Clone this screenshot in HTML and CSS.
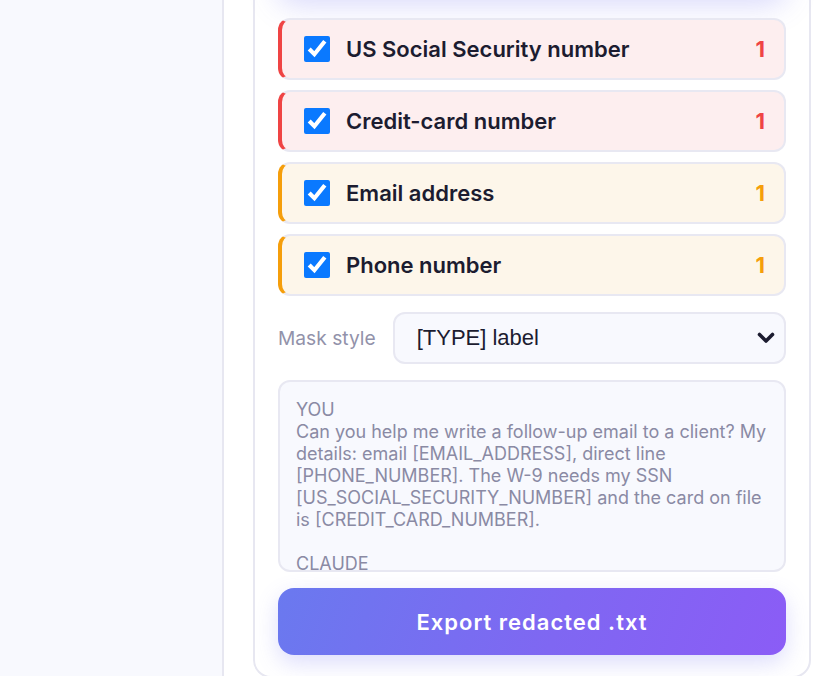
FILE: index.html
```html
<!DOCTYPE html>
<html lang="en">
<head>
<meta charset="utf-8">
<title>Redact</title>
<link rel="stylesheet" href="styles.css">
</head>
<body>
<div class="app">
  <aside class="sidebar"></aside>
  <main class="main">
    <section class="card">
      <div class="summary"></div>
      <ul class="types">
        <li class="type type-high">
          <input type="checkbox" class="check" checked>
          <span class="type-name">US Social Security number</span>
          <span class="type-count">1</span>
        </li>
        <li class="type type-high">
          <input type="checkbox" class="check" checked>
          <span class="type-name">Credit-card number</span>
          <span class="type-count">1</span>
        </li>
        <li class="type type-mid">
          <input type="checkbox" class="check" checked>
          <span class="type-name">Email address</span>
          <span class="type-count">1</span>
        </li>
        <li class="type type-mid">
          <input type="checkbox" class="check" checked>
          <span class="type-name">Phone number</span>
          <span class="type-count">1</span>
        </li>
      </ul>
      <div class="mask-row">
        <label class="mask-label" for="mask">Mask style</label>
        <div class="select-wrap">
          <select id="mask" class="select">
            <option>[TYPE] label</option>
            <option>█████ block</option>
            <option>*** stars</option>
          </select>
          <svg class="chev" width="18" height="12" viewBox="0 0 18 12" aria-hidden="true"><polyline points="2.5,2.5 9,9 15.5,2.5" fill="none" stroke="#1c1c30" stroke-width="3.6" stroke-linecap="round" stroke-linejoin="round"/></svg>
        </div>
      </div>
      <textarea class="preview" readonly>YOU
Can you help me write a follow-up email to a client? My details: email [EMAIL_ADDRESS], direct line [PHONE_NUMBER]. The W-9 needs my SSN [US_SOCIAL_SECURITY_NUMBER] and the card on file is [CREDIT_CARD_NUMBER].

CLAUDE
Of course! Here is a draft you can adapt.</textarea>
      <button class="export" type="button">Export redacted .txt</button>
    </section>
  </main>
</div>
</body>
</html>
```
FILE: styles.css
```css
* { box-sizing: border-box; }
html, body { margin: 0; padding: 0; height: 100%; overflow: hidden; }
body {
  font-family: "Inter", "Noto Sans", sans-serif;
  background: #ffffff;
  color: #1c1c30;
}
.app { display: flex; height: 676px; }
.sidebar {
  width: 224px;
  flex: none;
  background: #f8f9fe;
  border-right: 2px solid #e7e7f1;
}
.main {
  flex: 1;
  padding: 0 29px;
  background: #ffffff;
}
.card {
  margin-top: -103px;
  height: 781px;
  border: 2px solid #e7e7f1;
  border-radius: 18px;
  padding: 23px 23px 20px;
  display: flex;
  flex-direction: column;
  gap: 16px;
  background: #ffffff;
}
.summary {
  height: 74px;
  flex: none;
  margin-bottom: 6px;
  border-radius: 16px;
  background: #ffffff;
  box-shadow: 0 8px 30px rgba(99, 102, 241, 0.26);
}
.types {
  list-style: none;
  margin: 0;
  padding: 0;
  display: flex;
  flex-direction: column;
  gap: 10px;
}
.type {
  height: 62px;
  display: flex;
  align-items: center;
  gap: 16px;
  padding: 0 19px 0 22px;
  border: 2px solid #e8e8f2;
  border-radius: 12px;
}
.type-high { background: #fdeeef; border-left: 4px solid #ef4444; }
.type-mid { background: #fdf6ea; border-left: 4px solid #f59e0b; }
.check {
  width: 26px;
  height: 26px;
  margin: 0;
  flex: none;
  accent-color: #0a79ff;
}
.type-name {
  flex: 1;
  font-size: 22px;
  font-weight: 600;
  color: #1c1c30;
}
.type-count {
  font-size: 22px;
  font-weight: 700;
}
.type-high .type-count { color: #ef4444; }
.type-mid .type-count { color: #f59e0b; }
.mask-row {
  display: flex;
  align-items: center;
  gap: 17px;
}
.mask-label {
  font-size: 19.2px;
  color: #9292aa;
}
.select-wrap {
  position: relative;
  flex: 1;
}
.select {
  width: 100%;
  height: 52px;
  appearance: none;
  -webkit-appearance: none;
  border: 2px solid #e8e8f2;
  border-radius: 12px;
  background: #f8f9fe;
  padding: 0 40px 2px 22px;
  font-family: "Liberation Sans", Arial, sans-serif;
  font-size: 22px;
  color: #1c1c30;
  outline: none;
}
.chev {
  position: absolute;
  right: 11px;
  top: 20px;
  pointer-events: none;
}
.preview {
  height: 192px;
  flex: none;
  resize: none;
  border: 2px solid #e8e8f2;
  border-radius: 12px;
  background: #f8f9fe;
  padding: 17px 14px 16px 16px;
  font-family: "Inter", "Noto Sans", sans-serif;
  font-size: 18px;
  line-height: 22px;
  color: #8a8aa4;
  overflow: hidden;
  outline: none;
}
.export {
  height: 67px;
  flex: none;
  border: none;
  border-radius: 16px;
  background: linear-gradient(110deg, #6a79ef 0%, #7f67f2 55%, #8b5cf6 100%);
  color: #ffffff;
  font-family: "Inter", "Noto Sans", sans-serif;
  font-size: 22px;
  font-weight: 600;
  letter-spacing: 1px;
  box-shadow: 0 8px 22px rgba(99, 102, 241, 0.22);
}
```
